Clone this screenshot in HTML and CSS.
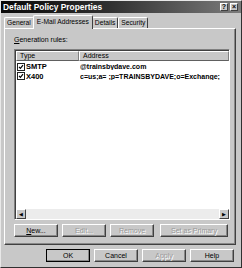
FILE: index.html
```html
<!DOCTYPE html>
<html lang="en">
<head>
    <meta charset="UTF-8">
    <title>Default Policy Properties</title>
    <link rel="stylesheet" href="styles.css">
</head>
<body>

    <div class="dialog">
        <div class="titlebar">
            <span class="title">Default Policy Properties</span>
            <span class="tbtn">?</span>
            <span class="tbtn close">×</span>
        </div>

        <div class="tabs">
            <div class="tab">General</div>
            <div class="tab active">E-Mail Addresses</div>
            <div class="tab">Details</div>
            <div class="tab">Security</div>
        </div>

        <div class="panel">
            <div class="label"><u>G</u>eneration rules:</div>

            <div class="list">
                <div class="head">
                    <div class="hcell type">Type</div>
                    <div class="hcell addr">Address</div>
                </div>
                <div class="rows">
                    <div class="row">
                        <div class="cell type">
                            <svg class="check" width="8" height="8" viewBox="0 0 8 8"><rect x="0.5" y="0.5" width="7" height="7" fill="#fff" stroke="#222"/><path d="M2 3.8 L3.4 5.3 L6 2.2" fill="none" stroke="#000" stroke-width="1.2"/></svg>
                            SMTP
                        </div>
                        <div class="cell addr">@trainsbydave.com</div>
                    </div>
                    <div class="row">
                        <div class="cell type">
                            <svg class="check" width="8" height="8" viewBox="0 0 8 8"><rect x="0.5" y="0.5" width="7" height="7" fill="#fff" stroke="#222"/><path d="M2 3.8 L3.4 5.3 L6 2.2" fill="none" stroke="#000" stroke-width="1.2"/></svg>
                            X400
                        </div>
                        <div class="cell addr">c=us;a= ;p=TRAINSBYDAVE;o=Exchange;</div>
                    </div>
                </div>
                <div class="hscroll">
                    <div class="arrow">&#9664;</div>
                    <div class="track"></div>
                    <div class="arrow">&#9654;</div>
                </div>
            </div>

            <div class="actions">
                <button class="btn"><u>N</u>ew...</button>
                <button class="btn" disabled>Edit...</button>
                <button class="btn" disabled>Remove</button>
                <button class="btn wide" disabled>Set as Primary</button>
            </div>
        </div>

        <div class="footer">
            <button class="btn default">OK</button>
            <button class="btn">Cancel</button>
            <button class="btn" disabled>Apply</button>
            <button class="btn">Help</button>
        </div>
    </div>

</body>
</html>
```

FILE: styles.css
```css
body {
    margin: 0;
    font-family: "Liberation Sans", Arial, sans-serif;
    font-size: 7px;
    color: #000;
    background-color: #c8c8c8;
}
.dialog {
    width: 242px;
    height: 268px;
    box-sizing: border-box;
    background-color: #c8c8c8;
    border: 1px solid;
    border-color: #e8e8e8 #303030 #303030 #e8e8e8;
    display: flex;
    flex-direction: column;
}
.titlebar {
    height: 12px;
    display: flex;
    align-items: center;
    padding: 0 3px 0 2px;
    background: linear-gradient(to right, #080808, #303030 45%, #7c7c7c);
}
.title {
    flex: 1;
    color: #fff;
    font-weight: bold;
    font-size: 8.4px;
}
.tbtn {
    width: 8px;
    height: 8px;
    margin-left: 1px;
    background-color: #c8c8c8;
    border: 1px solid;
    border-color: #fff #404040 #404040 #fff;
    box-sizing: border-box;
    font-size: 7px;
    font-weight: bold;
    line-height: 6px;
    text-align: center;
}
.tbtn.close {
    margin-left: 2px;
}
.tabs {
    display: flex;
    align-items: flex-end;
    height: 14px;
    padding-left: 3px;
    margin-top: 1px;
    font-size: 6.7px;
}
.tab {
    height: 11px;
    padding: 0 2px;
    line-height: 10px;
    box-sizing: border-box;
    border: 1px solid;
    border-bottom: none;
    border-color: #fff #404040 #404040 #fff;
    border-radius: 2px 2px 0 0;
}
.tab.active {
    height: 14px;
    padding: 0 3px;
    margin: 0 -1px -1px;
    line-height: 12px;
    background-color: #c8c8c8;
    position: relative;
    z-index: 1;
}
.panel {
    margin: 0 5px 0 3px;
    height: 217px;
    box-sizing: border-box;
    border: 1px solid;
    border-color: #fff #404040 #404040 #fff;
    box-shadow: inset -1px -1px 0 #888;
    padding: 7px 5px 0 9px;
    display: flex;
    flex-direction: column;
}
.label {
    height: 13px;
}
.list {
    height: 171px;
    box-sizing: border-box;
    background-color: #fff;
    border: 1px solid;
    border-color: #808080 #fff #fff #808080;
    box-shadow: inset 1px 1px 0 #404040;
    padding: 1px 0 0 1px;
    display: flex;
    flex-direction: column;
}
.head {
    display: flex;
    height: 10px;
}
.hcell {
    background-color: #c8c8c8;
    border: 1px solid;
    border-color: #fff #808080 #606060 #fff;
    box-sizing: border-box;
    padding-left: 3px;
    line-height: 8px;
}
.hcell.type {
    width: 63px;
}
.hcell.addr {
    flex: 1;
}
.rows {
    flex: 1;
    padding-top: 1px;
}
.row {
    display: flex;
    height: 9.5px;
    align-items: center;
    font-weight: bold;
    font-size: 7.5px;
}
.cell.type {
    width: 63px;
    display: flex;
    align-items: center;
    gap: 1px;
    padding-left: 1px;
}
.cell.addr {
    flex: 1;
    font-size: 7px;
    white-space: nowrap;
    overflow: hidden;
}
.hscroll {
    display: flex;
    height: 10px;
    background-color: #ececec;
}
.arrow {
    width: 10px;
    box-sizing: border-box;
    background-color: #c8c8c8;
    border: 1px solid;
    border-color: #fff #404040 #404040 #fff;
    font-size: 5px;
    line-height: 8px;
    text-align: center;
}
.track {
    flex: 1;
}
.actions {
    display: flex;
    gap: 4px;
    margin-top: 4px;
}
.btn {
    width: 44px;
    height: 13px;
    padding: 0;
    font-family: "Liberation Sans", Arial, sans-serif;
    font-size: 7px;
    color: #000;
    background-color: #c8c8c8;
    border: 1px solid;
    border-color: #fff #404040 #404040 #fff;
    box-shadow: inset -1px -1px 0 #888;
}
.btn:disabled {
    color: #999;
    text-shadow: 1px 1px 0 #fff;
}
.btn.wide {
    width: 68px;
    margin-left: 2px;
}
.footer {
    display: flex;
    gap: 4px;
    padding-left: 45px;
    margin-top: 4px;
}
.btn.default {
    outline: 1px solid #000;
    outline-offset: -1px;
}
```
